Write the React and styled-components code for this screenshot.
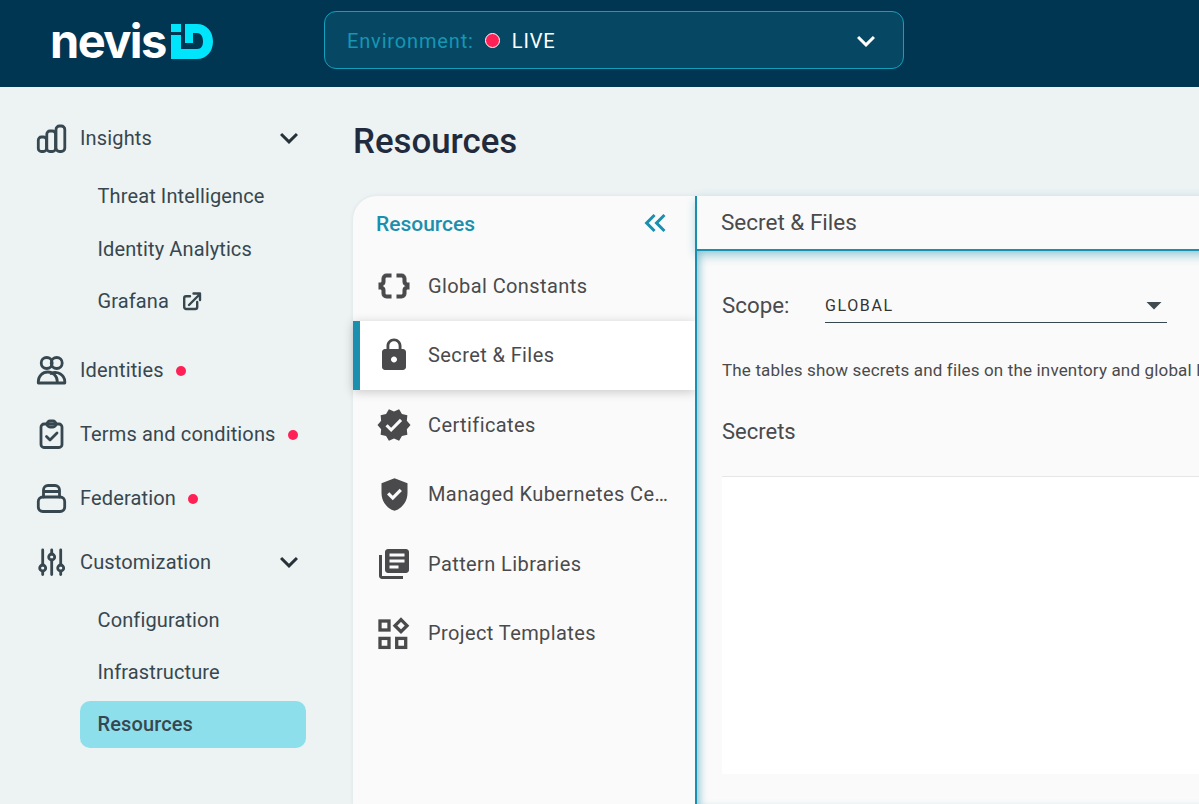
import React from "react";
import styled, { createGlobalStyle } from "styled-components";
import {
  MdLock, MdVerified, MdGppGood, MdLibraryBooks, MdDataObject,
  MdKeyboardDoubleArrowLeft, MdKeyboardArrowDown, MdArrowDropDown,
} from "react-icons/md";

const Global = createGlobalStyle`
  html, body { margin: 0; padding: 0; height: 100%; overflow: hidden; }
  body { font-family: Roboto, "Noto Sans", sans-serif; background: #edf2f3; }
  * { box-sizing: border-box; }
`;

const Page = styled.div`
  width: 1199px;
  height: 804px;
  display: flex;
  flex-direction: column;
  overflow: hidden;
`;

const Header = styled.header`
  height: 87px;
  flex: none;
  background: #003652;
  display: flex;
  align-items: center;
  padding-left: 52px;
`;

const Logo = styled.div`
  width: 272px;
  flex: none;
  display: flex;
  align-items: flex-end;
  gap: 5px;
  height: 36px;
  margin-top: -6px;
`;

const LogoWord = styled.span`
  font-family: Inter, "Liberation Sans", sans-serif;
  font-weight: 700;
  font-size: 47px;
  letter-spacing: -1.6px;
  line-height: 36px;
  height: 36px;
  margin-left: -2px;
  color: #fff;
`;

const MarkSvg = styled.svg`
  width: 42px;
  height: 35px;
  flex: none;
`;

const EnvSelect = styled.div`
  width: 580px;
  height: 58px;
  margin-top: -7px;
  display: flex;
  align-items: center;
  padding: 1px 19px 0 22px;
  background: #064863;
  border: 1px solid #13a0bd;
  border-radius: 12px;
  font-size: 20px;
  letter-spacing: 0.85px;
`;

const EnvLabel = styled.span`
  color: #1696b4;
`;

const EnvDot = styled.span`
  width: 15px;
  height: 15px;
  border-radius: 50%;
  background: #ff2155;
  border: 1px solid #fff;
  margin: 0 12px 0 11px;
`;

const EnvValue = styled.span`
  color: #fff;
  flex: 1;
`;

const EnvChevron = styled(MdKeyboardArrowDown)`
  width: 36px;
  height: 36px;
  color: #fff;
`;

const Body = styled.div`
  flex: 1;
  display: flex;
  min-height: 0;
`;

const Sidebar = styled.nav`
  width: 353px;
  flex: none;
  padding: 27px 0 0 36px;
  display: flex;
  flex-direction: column;
`;

const NavRow = styled.div`
  height: 48px;
  width: 271px;
  display: flex;
  align-items: center;
  color: #37474f;
  font-size: 20px;
  letter-spacing: 0.15px;
  margin-top: ${(p) => p.$gap || 0}px;
`;

const NavIcon = styled.svg`
  width: 31px;
  height: 32px;
  flex: none;
  margin-right: 13px;
  fill: none;
  stroke: #37474f;
  stroke-width: 2.8;
  stroke-linecap: round;
  stroke-linejoin: round;
`;

const NavLabel = styled.span`
  white-space: nowrap;
`;

const RedDot = styled.span`
  width: 10px;
  height: 10px;
  border-radius: 50%;
  background: #ff2155;
  margin-left: 12px;
  margin-top: 2px;
`;

const Chevron = styled(MdKeyboardArrowDown)`
  margin-left: auto;
  width: 36px;
  height: 36px;
  color: #263238;
`;

const SubList = styled.div`
  display: flex;
  flex-direction: column;
  padding-left: 44px;
  margin-top: ${(p) => p.$top}px;
`;

const SubItem = styled.div`
  width: 226px;
  height: 47px;
  margin-bottom: 5.3px;
  padding-left: 17.500px;
  display: flex;
  align-items: center;
  gap: 13px;
  font-size: 20px;
  letter-spacing: 0.12px;
  border-radius: 10px;
  color: #37474f;
  font-weight: ${(p) => (p.$active ? 500 : 400)};
  background: ${(p) => (p.$active ? "#8edfec" : "transparent")};
`;

const ExternalIcon = styled.svg`
  width: 20px;
  height: 20px;
  flex: none;
  fill: none;
  stroke: #37474f;
  stroke-width: 2.4;
  stroke-linecap: round;
  stroke-linejoin: round;
`;

const Main = styled.main`
  flex: 1;
  min-width: 0;
  display: flex;
  flex-direction: column;
`;

const Title = styled.h1`
  margin: 33px 0 0;
  height: 76px;
  font-size: 34.8px;
  line-height: 42px;
  font-weight: 500;
  color: #212b3d;
`;

const Workspace = styled.div`
  flex: 1;
  display: flex;
  min-height: 0;
  width: 900px;
`;

const ResourceMenu = styled.aside`
  width: 342px;
  flex: none;
  background: #fafafa;
  border-top-left-radius: 24px;
  box-shadow: 0 0 4px rgba(0, 60, 80, 0.08);
`;

const MenuHead = styled.div`
  height: 55px;
  display: flex;
  align-items: center;
  justify-content: space-between;
  padding: 3px 22px 2px 23px;
  font-size: 21px;
  font-weight: 500;
  color: #1a8fae;
`;

const Collapse = styled(MdKeyboardDoubleArrowLeft)`
  width: 36px;
  height: 36px;
  margin-bottom: 3px;
  color: #1a8fae;
`;

const MenuItem = styled.div`
  position: relative;
  height: 69.6px;
  display: flex;
  align-items: center;
  padding-bottom: 0.6px;
  font-size: 20px;
  letter-spacing: 0.4px;
  color: #4a4a4c;
  background: ${(p) => (p.$active ? "#fff" : "transparent")};
  border-left: ${(p) => (p.$active ? "7px solid #1a8fae" : "0")};
  padding-left: ${(p) => (p.$active ? "16px" : "23px")};
  box-shadow: ${(p) => (p.$active ? "0 2px 10px rgba(0,0,0,0.2)" : "none")};
  z-index: ${(p) => (p.$active ? 1 : 0)};
`;

const MenuIconSlot = styled.span`
  width: 36px;
  height: 36px;
  flex: none;
  margin-right: 16px;
  display: flex;
  align-items: center;
  justify-content: center;
  color: #4a4a4c;
  font-size: ${(p) => p.$size || 36}px;
  svg {
    flex: none;
  }
  ${(p) =>
    p.$bold
      ? `svg path:not([fill="none"]) { stroke: currentColor; stroke-width: 0.7; }`
      : ""}
`;

const TemplatesIcon = styled.svg`
  width: 36px;
  height: 36px;
  fill: none;
  stroke: #4a4a4c;
  stroke-width: 3.3;
`;

const MenuText = styled.span`
  width: 241px;
  white-space: nowrap;
  overflow: hidden;
  text-overflow: ellipsis;
`;

const Detail = styled.section`
  flex: 1;
  min-width: 0;
  display: flex;
  flex-direction: column;
  background: #fafafa;
  border-left: 2px solid #1a8fae;
  position: relative;
  z-index: 2;
`;

const DetailHead = styled.div`
  height: 55px;
  flex: none;
  display: flex;
  align-items: center;
  padding: 0 0 1px 24px;
  font-size: 22.5px;
  color: #4a4a4c;
  border-bottom: 2px solid #1a8fae;
  box-shadow: 0 4px 10px rgba(26, 143, 174, 0.45);
  background: #fafafa;
  position: relative;
`;

const DetailBody = styled.div`
  flex: 1;
  min-height: 0;
  padding: 32px 0 0 25px;
  box-shadow: inset 7px 0 8px -5px rgba(26, 143, 174, 0.55);
`;

const ScopeRow = styled.div`
  display: flex;
  align-items: center;
  height: 40px;
`;

const ScopeLabel = styled.span`
  width: 103px;
  margin-top: 3px;
  font-size: 22.3px;
  color: #4a4a4c;
`;

const ScopeSelect = styled.div`
  width: 342px;
  height: 40px;
  padding-top: 5px;
  display: flex;
  align-items: center;
  justify-content: space-between;
  border-bottom: 1px solid #37474f;
  font-size: 16px;
  letter-spacing: 1.6px;
  color: #333;
`;

const ScopeArrow = styled(MdArrowDropDown)`
  width: 36px;
  height: 36px;
  color: #3f4b50;
  margin-right: -4.5px;
`;

const Note = styled.p`
  margin: 35px 0 0;
  font-size: 17px;
  letter-spacing: 0.16px;
  line-height: 24px;
  white-space: nowrap;
  color: #4a4a4c;
`;

const SectionTitle = styled.h2`
  margin: 37px 0 0;
  font-size: 22px;
  line-height: 26px;
  font-weight: 400;
  color: #4a4a4c;
`;

const TableArea = styled.div`
  height: 298px;
  margin-top: 31px;
  background: #fff;
  border-top: 1px solid #e6e6e6;
`;

const ProjectTemplates = () => (
  <TemplatesIcon viewBox="0 0 36 36">
    <rect x="4" y="6" width="9" height="9" />
    <rect x="4" y="23.400" width="9" height="9" />
    <rect x="20.700" y="23.400" width="9" height="9" />
    <polygon points="25,4.700 31,10.700 25,16.700 19,10.700" />
  </TemplatesIcon>
);

const items = [
  { t: "Global Constants", I: MdDataObject, bold: true },
  { t: "Secret & Files", I: MdLock, active: true },
  { t: "Certificates", I: MdVerified },
  { t: "Managed Kubernetes Certificates", I: MdGppGood, size: 39 },
  { t: "Pattern Libraries", I: MdLibraryBooks },
  { t: "Project Templates", I: ProjectTemplates },
];

export default function App() {
  return (
    <Page>
      <Global />
      <Header>
        <Logo>
          <LogoWord>nevis</LogoWord>
          <MarkSvg viewBox="0 0 42 35">
            <path fill="#00e5fb" d="M0 0h10v8H0zM14 0h12c9.500 0 16 7.500 16 17.500S35.500 35 26 35H0V11h10v14h16c4.500 0 6-3.500 6-7.500S30.500 9 26 9h-4v10h-8z" />
          </MarkSvg>
        </Logo>
        <EnvSelect>
          <EnvLabel>Environment:</EnvLabel>
          <EnvDot />
          <EnvValue>LIVE</EnvValue>
          <EnvChevron />
        </EnvSelect>
      </Header>
      <Body>
        <Sidebar>
          <NavRow>
            <NavIcon viewBox="0 0 31 32">
              <rect x="2.300" y="15" width="8.200" height="14.500" rx="3" />
              <rect x="10.800" y="9" width="8.700" height="20.500" rx="3" />
              <rect x="20" y="4" width="8.800" height="25.500" rx="3.500" />
            </NavIcon>
            <NavLabel>Insights</NavLabel>
            <Chevron />
          </NavRow>
          <SubList $top={10.8}>
            <SubItem>Threat Intelligence</SubItem>
            <SubItem>Identity Analytics</SubItem>
            <SubItem>
              Grafana
              <ExternalIcon viewBox="0 0 20 20">
                <path d="M8 5.200H4a1.800 1.800 0 0 0-1.800 1.800V16a2 2 0 0 0 2 2h9a2 2 0 0 0 2-2v-5" />
                <path d="M7 14L18 3M11.500 2.500h6.500v6.500" />
              </ExternalIcon>
            </SubItem>
          </SubList>
          <NavRow $gap={16.3}>
            <NavIcon viewBox="0 0 31 32">
              <circle cx="10.700" cy="9" r="5.500" />
              <circle cx="20.700" cy="9" r="5.500" />
              <path d="M2.300 29v-1.500a9.500 9.500 0 0 1 19 0V29zM15 19.500a9.500 9.500 0 0 1 13.800 8V29H2.300" />
            </NavIcon>
            <NavLabel>Identities</NavLabel>
            <RedDot />
          </NavRow>
          <NavRow $gap={16}>
            <NavIcon viewBox="0 0 31 32">
              <rect x="5" y="6" width="21" height="23.500" rx="3" />
              <rect x="11" y="3" width="9" height="6" rx="3" />
              <path d="M10.500 18.500l3.500 3.500 7-7" />
            </NavIcon>
            <NavLabel>Terms and conditions</NavLabel>
            <RedDot />
          </NavRow>
          <NavRow $gap={16}>
            <NavIcon viewBox="0 0 31 32">
              <rect x="2.300" y="15" width="26.400" height="14.500" rx="4.500" />
              <path d="M7.500 15V8a4.500 4.500 0 0 1 4.500-4.500h7A4.500 4.500 0 0 1 23.500 8v7M8 9.500h15" />
            </NavIcon>
            <NavLabel>Federation</NavLabel>
            <RedDot />
          </NavRow>
          <NavRow $gap={16}>
            <NavIcon viewBox="0 0 31 32">
              <path d="M6.700 4v15M6.700 25.500v3M15.700 4v4M15.700 14v14.500M24.700 4v15M24.700 25.500v3" />
              <circle cx="6.700" cy="22" r="3" />
              <circle cx="15.700" cy="11" r="3" />
              <circle cx="24.700" cy="22" r="3" />
            </NavIcon>
            <NavLabel>Customization</NavLabel>
            <Chevron />
          </NavRow>
          <SubList $top={10.2}>
            <SubItem>Configuration</SubItem>
            <SubItem>Infrastructure</SubItem>
            <SubItem $active>Resources</SubItem>
          </SubList>
        </Sidebar>
        <Main>
          <Title>Resources</Title>
          <Workspace>
            <ResourceMenu>
              <MenuHead>
                Resources
                <Collapse />
              </MenuHead>
              {items.map(({ t, I, active, bold, size }) => (
                <MenuItem key={t} $active={active}>
                  <MenuIconSlot $bold={bold} $size={size}>
                    <I />
                  </MenuIconSlot>
                  <MenuText>{t}</MenuText>
                </MenuItem>
              ))}
            </ResourceMenu>
            <Detail>
              <DetailHead>Secret &amp; Files</DetailHead>
              <DetailBody>
                <ScopeRow>
                  <ScopeLabel>Scope:</ScopeLabel>
                  <ScopeSelect>
                    GLOBAL
                    <ScopeArrow />
                  </ScopeSelect>
                </ScopeRow>
                <Note>The tables show secrets and files on the inventory and global level of the selected scope.</Note>
                <SectionTitle>Secrets</SectionTitle>
                <TableArea />
              </DetailBody>
            </Detail>
          </Workspace>
        </Main>
      </Body>
    </Page>
  );
}
